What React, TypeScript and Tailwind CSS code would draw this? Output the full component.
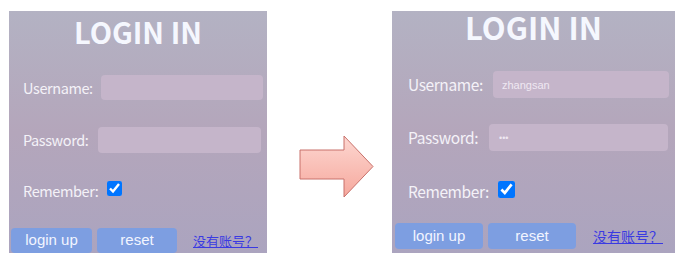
import { ReactNode } from 'react';

const cjk = "font-['Noto_Sans_CJK_SC',sans-serif]";
const arial = "font-['Liberation_Sans',Arial,sans-serif]";

type PanelProps = {
  className: string;
  title: string;
  children: ReactNode;
};

// one login card, rows placed in flow with fixed heights
function Panel({ className, title, children }: PanelProps) {
  return (
    <div className={`flex flex-col bg-gradient-to-b from-[#b3b2c3] via-[#b4a6bb] to-[#aba4bf] ${className}`}>
      <div className={`${cjk} ${title} flex items-center justify-center font-bold text-[#f5f7fe]`}>LOGIN IN</div>
      {children}
    </div>
  );
}

function Arrow() {
  return (
    <svg width="78" height="66" viewBox="298 134 78 66" className="mt-[123px] ml-[31px]">
      <defs>
        <linearGradient id="ar" x1="0" y1="0" x2="0" y2="1">
          <stop offset="0" stopColor="#fdd7d1" />
          <stop offset="1" stopColor="#f6a89d" />
        </linearGradient>
      </defs>
      <polygon
        points="300,150 344,150 344,136 373,166.5 344,197 344,179 300,179"
        fill="url(#ar)"
        stroke="#c8716b"
        strokeWidth="1"
      />
    </svg>
  );
}

const label = 'text-[#f4f2f8] tracking-[-0.4px]';

export default function App() {
  return (
    <div className="flex h-[269px] w-[681px] items-start bg-white pt-[11px] pl-[9px]">
      <Panel className="h-[242px] w-[258px]" title="h-[40px] text-[29px] leading-none">
        <div className="mt-[24px] flex h-[25px] items-center">
          <span className={`${cjk} ${label} ml-[14px] w-[78px] text-[14.5px]`}>Username:</span>
          <input className="h-[25px] w-[162px] rounded-[4px] bg-[#c5b5ca] outline-none" />
        </div>
        <div className="mt-[27px] flex h-[26px] items-center">
          <span className={`${cjk} ${label} ml-[14px] w-[75px] text-[14.5px]`}>Password:</span>
          <input type="password" className="h-[26px] w-[163px] rounded-[4px] bg-[#c5b5ca] outline-none" />
        </div>
        <div className="mt-[22px] flex h-[26px] items-center">
          <span className={`${cjk} ${label} ml-[14px] w-[84px] pt-[5px] text-[14.5px]`}>Remember:</span>
          <input type="checkbox" defaultChecked className="h-[15px] w-[15px]" />
        </div>
        <div className={`${arial} mt-[27px] flex h-[25px] items-center text-[15px]`}>
          <button className="ml-[2px] h-[25px] w-[81px] rounded-[4px] bg-[#7d9ee1] text-[#f2f5ff]">login up</button>
          <button className="ml-[5px] h-[25px] w-[80px] rounded-[4px] bg-[#7d9ee1] text-[#f2f5ff]">reset</button>
          <a href="#" className={`${cjk} ml-[16px] text-[13px] text-[#3a3ae2] underline`}>没有账号？</a>
        </div>
      </Panel>

      <Arrow />

      <Panel className="ml-[16px] h-[242px] w-[283px]" title="h-[30px] text-[31px] leading-none">
        <div className="mt-[30px] flex h-[27px] items-center">
          <span className={`${cjk} ${label} ml-[16px] w-[85px] text-[15.5px]`}>Username:</span>
          <input
            defaultValue="zhangsan"
            className={`${arial} h-[27px] w-[176px] rounded-[4px] bg-[#c5b5ca] pl-[9px] text-[11px] text-[#efe8f2] outline-none`}
          />
        </div>
        <div className="mt-[26px] flex h-[27px] items-center">
          <span className={`${cjk} ${label} ml-[16px] w-[81px] text-[15.5px]`}>Password:</span>
          <input
            type="password"
            defaultValue="123"
            className={`${arial} h-[27px] w-[179px] rounded-[4px] bg-[#c5b5ca] pl-[10px] text-[9px] text-[#efe8f2] outline-none`}
          />
        </div>
        <div className="mt-[24px] flex h-[28px] items-center">
          <span className={`${cjk} ${label} ml-[16px] w-[90px] pt-[6px] text-[15.5px]`}>Remember:</span>
          <input type="checkbox" defaultChecked className="h-[17px] w-[17px]" />
        </div>
        <div className={`${arial} mt-[20px] flex h-[26px] items-center text-[15px]`}>
          <button className="ml-[3px] h-[26px] w-[88px] rounded-[4px] bg-[#7d9ee1] text-[#f2f5ff]">login up</button>
          <button className="ml-[5px] h-[26px] w-[88px] rounded-[4px] bg-[#7d9ee1] text-[#f2f5ff]">reset</button>
          <a href="#" className={`${cjk} ml-[17px] text-[14px] text-[#3a3ae2] underline`}>没有账号？</a>
        </div>
      </Panel>
    </div>
  );
}
